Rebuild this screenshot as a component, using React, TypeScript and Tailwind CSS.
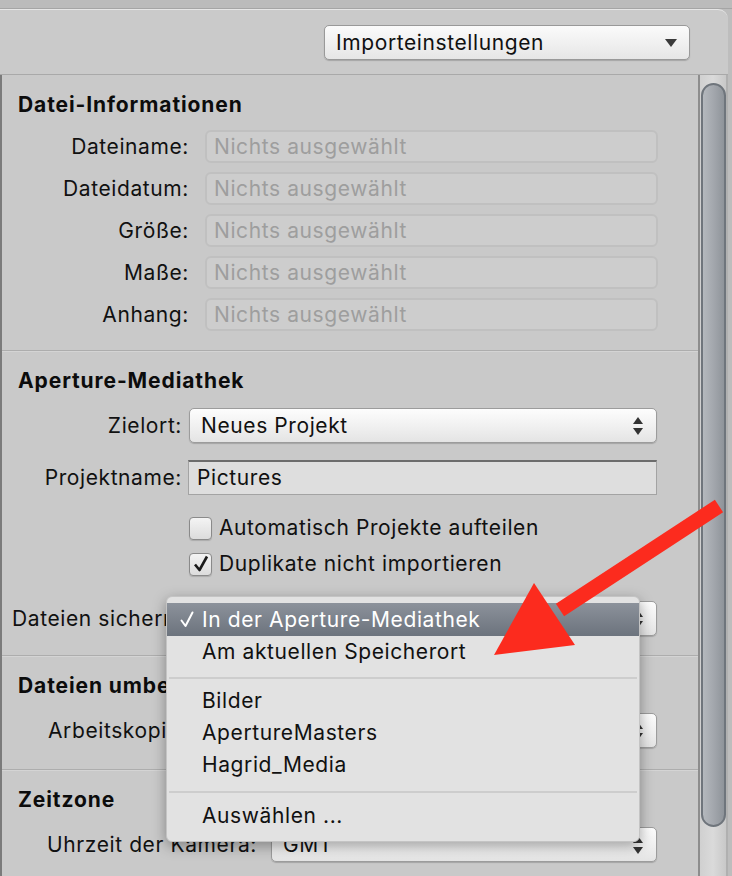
import React from "react";

const font = { fontFamily: "Inter, 'Noto Sans', sans-serif" };

function Stepper() {
  return (
    <svg width="12" height="22" viewBox="0 0 12 22" className="flex-shrink-0">
      <path d="M6 2 L11 9 L1 9 Z" fill="#333" />
      <path d="M6 20 L11 13 L1 13 Z" fill="#333" />
    </svg>
  );
}

function Popup({ text, className = "" }: { text: string; className?: string }) {
  return (
    <div
      className={`h-[35px] flex items-center justify-between pl-[11px] pr-[12px] rounded-[5px] border border-[#9c9c9c] bg-gradient-to-b from-[#fdfdfd] via-[#f1f1f1] to-[#e4e4e4] shadow-[0_1px_1px_rgba(0,0,0,0.18)] text-[21px] text-[#111] ${className}`}
    >
      <span className="whitespace-nowrap">{text}</span>
      <Stepper />
    </div>
  );
}

function InfoRow({ label }: { label: string }) {
  return (
    <div className="flex items-center h-[33px]">
      <span className="w-[187px] text-right text-[21px] text-[#111]">{label}</span>
      <div className="ml-[16px] w-[453px] h-[33px] flex items-center pl-[7px] rounded-[6px] border-2 border-[#c0c0c0] bg-[#cdcdcd] text-[21px] text-[#9e9e9e]">
        Nichts ausgewählt
      </div>
    </div>
  );
}

function Checkbox({ checked, label }: { checked?: boolean; label: string }) {
  return (
    <div className="flex items-center h-[24px]">
      <div className="w-[23px] h-[23px] rounded-[4px] border border-[#8a8a8a] bg-gradient-to-b from-[#f4f4f4] to-[#dcdcdc] shadow-[0_1px_1px_rgba(0,0,0,0.15)] flex items-center justify-center">
        {checked && (
          <svg width="18" height="18" viewBox="0 0 18 18">
            <path d="M3 9.5 L7.5 15 L15 1.5" fill="none" stroke="#1a1a1a" strokeWidth="2.6" strokeLinejoin="round" />
          </svg>
        )}
      </div>
      <span className="ml-[7px] text-[21px] text-[#111] whitespace-nowrap">{label}</span>
    </div>
  );
}

function Divider() {
  return <div className="h-[2px] bg-[#adadad] border-b border-[#d4d4d4]" />;
}

function Heading({ children }: { children: React.ReactNode }) {
  return (
    <h2 className="pl-[16px] h-[26px] leading-[26px] text-[21px] font-bold tracking-[0.9px] text-[#0c0c0c] whitespace-nowrap">
      {children}
    </h2>
  );
}

export default function App() {
  return (
    <div className="w-[732px] h-[876px] bg-[#bdbdbd] relative overflow-hidden tracking-[0.6px]" style={font}>
      <div className="h-[9px] bg-[#bbbbbb] border-b border-[#a5a5a5]" />
      <div className="h-[867px] flex flex-col bg-[#cacaca] rounded-tr-[10px] border-t border-[#e6e6e6] mr-[4px]">
        {/* header */}
        <div className="h-[65px] flex justify-end items-start pt-[15px] pr-[38px] border-b border-[#a9a9a9]">
          <div className="w-[366px] h-[35px] flex items-center justify-between pl-[11px] pr-[11px] rounded-[5px] border border-[#999] bg-gradient-to-b from-[#fbfbfb] to-[#e6e6e6] shadow-[0_1px_1px_rgba(0,0,0,0.18)]">
            <span className="text-[21px] text-[#111]">Importeinstellungen</span>
            <svg width="14" height="10" viewBox="0 0 14 10">
              <path d="M1 1 H13 L7 9 Z" fill="#3a3a3a" />
            </svg>
          </div>
        </div>

        <div className="flex-1 flex">
          {/* content */}
          <div className="flex-1 border-l-2 border-[#7b7b7b] bg-[#c9c9c9] flex flex-col overflow-hidden">
            <section className="pt-[17px] pb-[19px]">
              <Heading>Datei-Informationen</Heading>
              <div className="mt-[12px] flex flex-col gap-[9px]">
                <InfoRow label="Dateiname:" />
                <InfoRow label="Dateidatum:" />
                <InfoRow label="Größe:" />
                <InfoRow label="Maße:" />
                <InfoRow label="Anhang:" />
              </div>
            </section>
            <Divider />
            <section className="pt-[16px] pb-[19px]">
              <Heading>Aperture-Mediathek</Heading>
              <div className="mt-[14px] flex items-center">
                <span className="w-[180px] text-right text-[21px] text-[#111]">Zielort:</span>
                <Popup text="Neues Projekt" className="ml-[7px] w-[468px]" />
              </div>
              <div className="mt-[17px] flex items-center">
                <span className="w-[180px] text-right text-[21px] text-[#111]">Projektname:</span>
                <div className="ml-[6px] w-[469px] h-[35px] flex items-center pl-[8px] bg-[#dedede] border border-[#a3a3a3] border-t-2 border-t-[#6c6c6c] text-[21px] text-[#111]">
                  Pictures
                </div>
              </div>
              <div className="mt-[21px] ml-[187px] flex flex-col gap-[12px]">
                <Checkbox label="Automatisch Projekte aufteilen" />
                <Checkbox checked label="Duplikate nicht importieren" />
              </div>
              <div className="mt-[25px] flex items-center">
                <span className="pl-[10px] w-[174px] text-[21px] text-[#111] whitespace-nowrap overflow-hidden">Dateien sichern:</span>
                <Popup text="In der Aperture-Mediathek" className="w-[481px]" />
              </div>
            </section>
            <Divider />
            <section className="pt-[16px] pb-[21px]">
              <Heading>Dateien umbenennen</Heading>
              <div className="mt-[14px] flex items-center">
                <span className="pl-[46px] w-[210px] text-[21px] text-[#111] whitespace-nowrap overflow-hidden">Arbeitskopien:</span>
                <Popup text="Originalname" className="w-[445px]" />
              </div>
            </section>
            <Divider />
            <section className="pt-[16px]">
              <Heading>Zeitzone</Heading>
              <div className="mt-[14px] flex items-center">
                <span className="pl-[45px] w-[269px] text-[21px] text-[#111] whitespace-nowrap">Uhrzeit der Kamera:</span>
                <Popup text="GMT" className="w-[386px]" />
              </div>
            </section>
          </div>

          {/* scrollbar */}
          <div className="w-[30px] border-l-2 border-[#8d8d8d] bg-gradient-to-r from-[#d0d0d0] via-[#dadada] to-[#c8c8c8] pt-[8px] px-[1px] border-r-2 border-r-[#b0b0b0]">
            <div className="h-[744px] w-[25px] rounded-full border-2 border-[#6f757c] bg-gradient-to-r from-[#b4b8bd] via-[#a3a7ad] to-[#8f949a]" />
          </div>
        </div>
      </div>

      {/* dropdown menu */}
      <div className="absolute left-[166px] top-[596px] w-[474px] pt-[6px] pb-[9px] rounded-[6px] bg-[#e2e2e2] shadow-[0_4px_14px_rgba(0,0,0,0.35)] border border-[#c4c4c4] text-[21px]">
        <div className="h-[33px] flex items-center bg-gradient-to-b from-[#8c929b] to-[#6c737d] text-white">
          <span className="w-[35px] pl-[13px] flex items-center">
            <svg width="14" height="17" viewBox="0 0 14 17">
              <path d="M1.5 9.5 L5.5 15 L12.5 1.5" fill="none" stroke="#fff" strokeWidth="2" strokeLinejoin="round" strokeLinecap="round" />
            </svg>
          </span>
          <span>In der Aperture-Mediathek</span>
        </div>
        <div className="h-[32px] flex items-center pl-[35px] text-[#111]">Am aktuellen Speicherort</div>
        <div className="mt-[9px] mb-[6px] mx-[2px] h-[2px] bg-[#cdcdcd]" />
        <div className="h-[32px] flex items-center pl-[35px] text-[#111]">Bilder</div>
        <div className="h-[32px] flex items-center pl-[35px] text-[#111]">ApertureMasters</div>
        <div className="h-[32px] flex items-center pl-[35px] text-[#111]">Hagrid_Media</div>
        <div className="mt-[10px] mb-[7px] mx-[2px] h-[2px] bg-[#cdcdcd]" />
        <div className="h-[32px] flex items-center pl-[35px] text-[#111]">Auswählen ...</div>
      </div>

      {/* red arrow */}
      <svg className="absolute left-0 top-0 pointer-events-none" width="732" height="876" viewBox="0 0 732 876">
        <path d="M719 506 L560 610" stroke="#fc2b1e" strokeWidth="15" strokeLinecap="butt" />
        <path d="M494 655 L534 583 L575 645 Z" fill="#fc2b1e" />
      </svg>
    </div>
  );
}
